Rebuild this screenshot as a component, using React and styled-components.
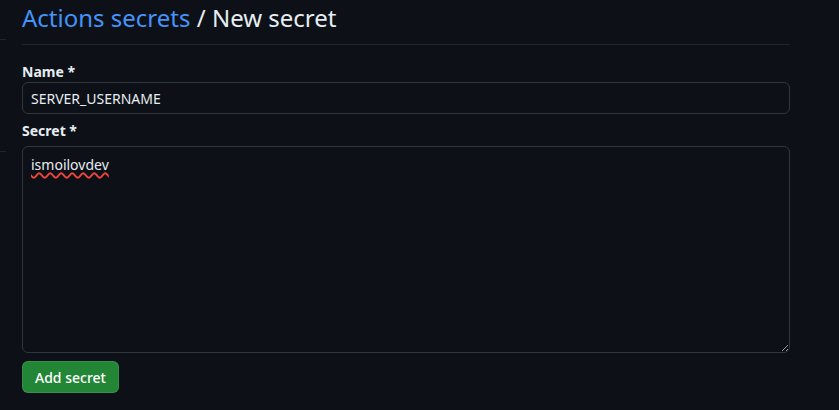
import React from 'react';
import styled, { createGlobalStyle } from 'styled-components';

const Global = createGlobalStyle`
  html, body {
    margin: 0;
    background: #0d1117;
    color: #e6edf3;
    font-family: "Noto Sans", "Open Sans", sans-serif;
  }
`

const Page = styled.main`
  position: relative;
  height: 410px;
  padding: 0 49px 0 22px;
  overflow: hidden;
`

const SideTick = styled.div`
  position: absolute;
  left: 0;
  top: ${({ top }) => top}px;
  width: 6px;
  height: 1px;
  background: #21262d;
`

const Heading = styled.h1`
  margin: 0;
  padding: 0 0 8px;
  font-size: 24px;
  font-weight: 400;
  line-height: 36px;
  border-bottom: 1px solid #21262d;

  a {
    color: #4493f8;
    text-decoration: none;
  }
`

const Form = styled.form`
  display: flex;
  flex-direction: column;
  padding-top: 18px;
`

const Label = styled.label`
  font-size: 14px;
  font-weight: 700;
  line-height: 18px;
  margin-bottom: ${({ space }) => space}px;
`

const Input = styled.input`
  box-sizing: border-box;
  height: 32px;
  padding: 0 8px;
  margin-bottom: 8px;
  background: #0d1117;
  color: #e6edf3;
  border: 1px solid #30363d;
  border-radius: 6px;
  font: 14px "Noto Sans", "Open Sans", sans-serif;
  outline: none;
`

const TextArea = styled.div`
  box-sizing: border-box;
  height: 207px;
  padding: 8px;
  margin-bottom: 8px;
  background: #0d1117;
  border: 1px solid #30363d;
  border-radius: 6px;
  font-size: 14px;
  line-height: 20px;
  resize: both;
  overflow: auto;
  color-scheme: dark;
`

const Misspelled = styled.span`
  text-decoration: underline wavy #f0443a;
  text-decoration-thickness: 1.5px;
  text-underline-offset: 2px;
`

const Button = styled.button`
  align-self: flex-start;
  height: 32px;
  padding: 0 12px;
  background: #238636;
  color: #ffffff;
  border: 1px solid rgba(240, 246, 252, 0.1);
  border-radius: 6px;
  font: 500 14px "Noto Sans", "Open Sans", sans-serif;
  cursor: pointer;
`

const App = () => {
    return (
        <>
            <Global />
            <Page>
                <SideTick top={39} />
                <SideTick top={151} />
                <Heading>
                    <a href="#">Actions secrets</a> / New secret
                </Heading>
                <Form onSubmit={(e) => e.preventDefault()}>
                    <Label space={1}>Name *</Label>
                    <Input defaultValue="SERVER_USERNAME" />
                    <Label space={6}>Secret *</Label>
                    <TextArea>
                        <Misspelled>ismoilovdev</Misspelled>
                    </TextArea>
                    <Button type="submit">Add secret</Button>
                </Form>
            </Page>
        </>
    )
}

export default App;
